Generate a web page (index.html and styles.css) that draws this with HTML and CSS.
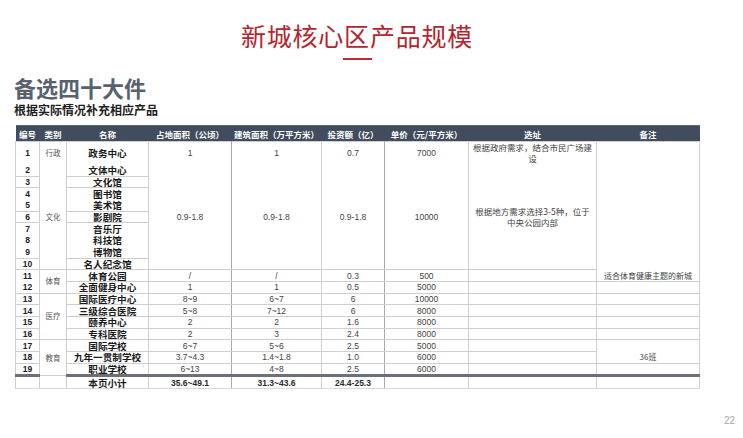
FILE: index.html
```html
<!DOCTYPE html>
<html lang="zh">
<head>
<meta charset="utf-8">
<link rel="stylesheet" href="styles.css">
</head>
<body>
<div class="page">
  <div class="head">
    <h1 class="title">新城核心区产品规模</h1>
    <div class="title-bar"></div>
  </div>
  <h2 class="section">备选四十大件</h2>
  <p class="sub">根据实际情况补充相应产品</p>
  <table class="grid">
    <colgroup>
      <col style="width:24px"><col style="width:27px"><col style="width:82px"><col style="width:83px"><col style="width:90px"><col style="width:63px"><col style="width:84px"><col style="width:128px"><col style="width:103px">
    </colgroup>
    <thead>
      <tr><th>编号</th><th>类别</th><th>名称</th><th>占地面积（公顷）</th><th>建筑面积（万平方米）</th><th>投资额（亿）</th><th>单价（元/平方米）</th><th>选址</th><th>备注</th></tr>
    </thead>
    <tbody>
      <tr class="r1"><td class="no nb">1</td><td class="cat nb">行政</td><td class="nm nb">政务中心</td><td class="v nb dk">1</td><td class="v nb">1</td><td class="v nb dk">0.7</td><td class="v nb">7000</td><td class="addr nb">根据政府需求，结合市民广场建设</td><td class="nb" rowspan="10"></td></tr>
      <tr><td class="no">2</td><td class="cat mid" rowspan="9">文化</td><td class="nm">文体中心</td><td class="v mid dk" rowspan="9">0.9-1.8</td><td class="v mid" rowspan="9">0.9-1.8</td><td class="v mid dk" rowspan="9">0.9-1.8</td><td class="v mid" rowspan="9">10000</td><td class="addr mid" rowspan="9">根据地方需求选择3-5种，位于中央公园内部</td></tr>
      <tr><td class="no">3</td><td class="nm">文化馆</td></tr>
      <tr><td class="no nb">4</td><td class="nm nb">图书馆</td></tr>
      <tr><td class="no">5</td><td class="nm">美术馆</td></tr>
      <tr><td class="no">6</td><td class="nm">影剧院</td></tr>
      <tr><td class="no nb">7</td><td class="nm nb">音乐厅</td></tr>
      <tr><td class="no nb">8</td><td class="nm nb">科技馆</td></tr>
      <tr><td class="no">9</td><td class="nm">博物馆</td></tr>
      <tr><td class="no">10</td><td class="nm">名人纪念馆</td></tr>
      <tr><td class="no nb">11</td><td class="cat mid" rowspan="2">体育</td><td class="nm">体育公园</td><td class="v dk">/</td><td class="v">/</td><td class="v dk">0.3</td><td class="v">500</td><td class="addr"></td><td class="note">适合体育健康主题的新城</td></tr>
      <tr><td class="no">12</td><td class="nm">全面健身中心</td><td class="v dk">1</td><td class="v">1</td><td class="v dk">0.5</td><td class="v">5000</td><td class="addr"></td><td class="note"></td></tr>
      <tr><td class="no">13</td><td class="cat mid" rowspan="4">医疗</td><td class="nm">国际医疗中心</td><td class="v dk">8~9</td><td class="v">6~7</td><td class="v dk">6</td><td class="v">10000</td><td class="addr"></td><td class="note"></td></tr>
      <tr><td class="no">14</td><td class="nm">三级综合医院</td><td class="v dk">5~8</td><td class="v">7~12</td><td class="v dk">6</td><td class="v">8000</td><td class="addr"></td><td class="note"></td></tr>
      <tr><td class="no">15</td><td class="nm">颐养中心</td><td class="v dk">2</td><td class="v">2</td><td class="v dk">1.6</td><td class="v">8000</td><td class="addr"></td><td class="note"></td></tr>
      <tr><td class="no">16</td><td class="nm">专科医院</td><td class="v dk">2</td><td class="v">3</td><td class="v dk">2.4</td><td class="v">8000</td><td class="addr"></td><td class="note"></td></tr>
      <tr><td class="no">17</td><td class="cat mid" rowspan="3">教育</td><td class="nm">国际学校</td><td class="v dk">6~7</td><td class="v">5~6</td><td class="v dk">2.5</td><td class="v">5000</td><td class="addr"></td><td class="note nb"></td></tr>
      <tr><td class="no">18</td><td class="nm">九年一贯制学校</td><td class="v dk">3.7~4.3</td><td class="v">1.4~1.8</td><td class="v dk">1.0</td><td class="v">6000</td><td class="addr"></td><td class="note">36班</td></tr>
      <tr class="last"><td class="no">19</td><td class="nm">职业学校</td><td class="v dk">6~13</td><td class="v">4~8</td><td class="v dk">2.5</td><td class="v">6000</td><td class="addr"></td><td class="note"></td></tr>
      <tr class="total"><td></td><td></td><td class="nm">本页小计</td><td class="sum dk">35.6~49.1</td><td class="sum">31.3~43.6</td><td class="sum dk">24.4-25.3</td><td></td><td></td><td></td></tr>
    </tbody>
  </table>
  <div class="pageno">22</div>
</div>
</body>
</html>
```

FILE: styles.css
```css
html, body {
  margin: 0;
  padding: 0;
  background: #ffffff;
}

body {
  font-family: "Liberation Sans", "Noto Sans CJK SC", sans-serif;
  width: 743px;
  height: 438px;
  overflow: hidden;
}

.page {
  padding: 0 0 0 15px;
}

.head {
  width: 684px;
  padding-top: 20px;
}

.title {
  margin: 0;
  font-family: "Noto Sans CJK SC", sans-serif;
  font-weight: 400;
  font-size: 25px;
  line-height: 30px;
  color: #b3262f;
  text-align: center;
  letter-spacing: 0.8px;
}

.title-bar {
  width: 29px;
  height: 2px;
  background: #c2282f;
  margin: 8px auto 0;
}

.section {
  margin: 14px 0 0 -1px;
  font-family: "Noto Sans CJK SC", sans-serif;
  font-weight: 700;
  font-size: 22px;
  line-height: 26px;
  color: #58616d;
}

.sub {
  margin: 3px 0 0 -1px;
  font-family: "Noto Sans CJK SC", sans-serif;
  font-weight: 700;
  font-size: 12px;
  line-height: 14px;
  color: #1e1e1e;
}

.grid {
  margin-top: 8px;
  width: 684px;
  table-layout: fixed;
  border-collapse: collapse;
  font-size: 8.5px;
  color: #444;
}

.grid th {
  background: #414c5e;
  color: #ffffff;
  font-family: "Noto Sans CJK SC", sans-serif;
  font-weight: 700;
  font-size: 8.5px;
  height: 15px;
  line-height: 10px;
  padding: 0;
  white-space: nowrap;
  text-align: center;
  border: 0;
  border-top: 1px solid #5d6778;
}

.grid td {
  height: 10.7px;
  padding: 0;
  line-height: 10px;
  text-align: center;
  vertical-align: middle;
  border: 1px solid #cfcfcf;
  white-space: nowrap;
}

.grid td.nb {
  border-bottom-color: transparent;
}

.grid .r1 td {
  height: 18px;
}

.grid td.dk {
  border-right-color: #a9a9a9;
}

.no {
  font-weight: 700;
  font-size: 8.5px;
  color: #222;
}

.cat {
  font-family: "Noto Sans CJK SC", sans-serif;
  font-size: 7.5px;
  color: #555;
}

.nm {
  font-family: "Noto Sans CJK SC", sans-serif;
  font-weight: 700;
  font-size: 9.6px;
  color: #1a1a1a;
}

.addr {
  font-family: "Noto Sans CJK SC", sans-serif;
  font-size: 8.5px;
  color: #444;
}

.grid td.addr {
  white-space: normal;
  line-height: 11px;
  padding: 0 3px;
}

.grid .r1 td.addr {
  vertical-align: top;
  padding-top: 0;
}

.note {
  font-family: "Noto Sans CJK SC", sans-serif;
  font-size: 8px;
  color: #444;
}

.grid .last td {
  border-bottom: 3px solid #6d7076;
}

.grid .total td {
  height: 11px;
  border-bottom-color: #d9d9d9;
}

.sum {
  font-weight: 700;
  color: #2a2a2a;
}

.pageno {
  width: 720px;
  margin-top: 26px;
  line-height: 12px;
  text-align: right;
  font-size: 10px;
  color: #a8a8a8;
}
```
